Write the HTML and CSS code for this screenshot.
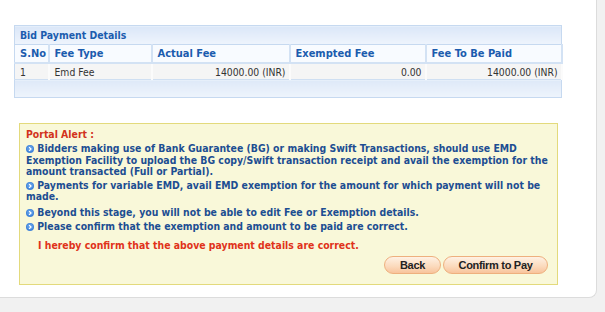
FILE: index.html
```html
<!DOCTYPE html>
<html>
<head>
    <meta charset="utf-8"/>
    <title>Bid Payment Details</title>
    <link rel="stylesheet" href="styles.css">
</head>
<body>
<div class="page">

    <table class="paytable">
        <colgroup>
            <col class="c-sno">
            <col class="c-type">
            <col class="c-fee">
            <col class="c-exm">
            <col class="c-pay">
        </colgroup>
        <tr class="caption">
            <td colspan="5">Bid Payment Details</td>
        </tr>
        <tr class="head">
            <th>S.No</th>
            <th>Fee Type</th>
            <th>Actual Fee</th>
            <th>Exempted Fee</th>
            <th>Fee To Be Paid</th>
        </tr>
        <tr class="data">
            <td>1</td>
            <td>Emd Fee</td>
            <td class="num">14000.00 (INR)</td>
            <td class="num">0.00</td>
            <td class="num">14000.00 (INR)</td>
        </tr>
        <tr class="foot">
            <td colspan="5"></td>
        </tr>
    </table>

    <div class="alert">
        <div class="alert-title">Portal Alert :</div>

        <p class="item item-1"><svg class="bullet" viewBox="0 0 8 8"><circle cx="4" cy="4" r="4" fill="#3f82d9"/><circle cx="4" cy="3.4" r="3" fill="#5b9be6"/><path d="M3.1 2.1 L5 4 L3.1 5.9" stroke="#fff" stroke-width="1.3" fill="none"/></svg> Bidders making use of Bank Guarantee (BG) or making Swift Transactions, should use EMD Exemption Facility to upload the BG copy/Swift transaction receipt and avail the exemption for the amount transacted (Full or Partial).</p>

        <p class="item item-2"><svg class="bullet" viewBox="0 0 8 8"><circle cx="4" cy="4" r="4" fill="#3f82d9"/><circle cx="4" cy="3.4" r="3" fill="#5b9be6"/><path d="M3.1 2.1 L5 4 L3.1 5.9" stroke="#fff" stroke-width="1.3" fill="none"/></svg> Payments for variable EMD, avail EMD exemption for the amount for which payment will not be made.</p>

        <p class="item item-3"><svg class="bullet" viewBox="0 0 8 8"><circle cx="4" cy="4" r="4" fill="#3f82d9"/><circle cx="4" cy="3.4" r="3" fill="#5b9be6"/><path d="M3.1 2.1 L5 4 L3.1 5.9" stroke="#fff" stroke-width="1.3" fill="none"/></svg> Beyond this stage, you will not be able to edit Fee or Exemption details.</p>

        <p class="item item-4"><svg class="bullet" viewBox="0 0 8 8"><circle cx="4" cy="4" r="4" fill="#3f82d9"/><circle cx="4" cy="3.4" r="3" fill="#5b9be6"/><path d="M3.1 2.1 L5 4 L3.1 5.9" stroke="#fff" stroke-width="1.3" fill="none"/></svg> Please confirm that the exemption and amount to be paid are correct.</p>

        <p class="confirm">I hereby confirm that the above payment details are correct.</p>

        <div class="actions">
            <button type="button" class="btn btn-back">Back</button>
            <button type="button" class="btn btn-pay">Confirm to Pay</button>
        </div>
    </div>

</div>
</body>
</html>
```

FILE: styles.css
```css
body {
    margin: 0;
    background: #f1f1f1;
    font-family: "DejaVu Sans Condensed", "DejaVu Sans", sans-serif;
}

.page {
    box-sizing: border-box;
    width: 597px;
    height: 298px;
    padding: 25px 0 0 14px;
    background: #fff;
    border-right: 1px solid #dcdcdc;
    border-bottom: 1px solid #dcdcdc;
    border-bottom-right-radius: 8px;
}

/* payment table */
.paytable {
    width: 547px;
    table-layout: fixed;
    border-collapse: collapse;
    border: 1px solid #c6d9f0;
}
.c-sno { width: 34px; }
.c-type { width: 103px; }
.c-fee { width: 138px; }
.c-exm { width: 136px; }
.c-pay { width: 136px; }

.paytable td, .paytable th {
    padding: 0 5px;
    overflow: hidden;
    white-space: nowrap;
}
.caption td {
    height: 18px;
    font-size: 10.4px;
    font-weight: bold;
    color: #1b5cae;
    background: linear-gradient(#dbe7f8, #eef4fc);
    border-bottom: 1px solid #c6d9f0;
}
.head th {
    height: 17px;
    text-align: left;
    font-size: 11px;
    font-weight: bold;
    color: #1b5cae;
    background: #f8fbff;
    border: 1px solid #d3e2f4;
    border-width: 0 2px 2px 0;
}
.data td {
    height: 15px;
    font-size: 10.3px;
    color: #333;
    background: #f5f5f5;
    border-right: 2px solid #fbfbfb;
    border-bottom: 1px solid #cfdff2;
}
.data td.num {
    text-align: right;
    padding-right: 3px;
}
.foot td {
    height: 17px;
    background: linear-gradient(#dee9f8, #eef4fc);
}

/* portal alert */
.alert {
    box-sizing: border-box;
    width: 539px;
    height: 162px;
    margin: 25px 0 0 5px;
    padding: 4px 6px 0 6px;
    background: #f9f8d9;
    border: 1px solid #e3da7c;
    font-size: 10.4px;
    font-weight: bold;
    line-height: 11.5px;
}
.alert-title {
    line-height: 12px;
    color: #d2331c;
}
.item {
    margin: 0;
    color: #1d4e92;
}
.item-1 { margin-top: 3px; }
.item-2 { margin-top: 2px; }
.item-3 { margin-top: 4px; }
.item-4 { margin-top: 3px; }
.bullet {
    width: 8px;
    height: 8px;
    vertical-align: -1px;
}
.confirm {
    margin: 7px 0 0 12px;
    color: #e0321a;
}
.actions {
    display: flex;
    justify-content: flex-end;
    gap: 2px;
    margin: 5px 3px 0 0;
}
.btn {
    box-sizing: border-box;
    height: 18px;
    padding: 0;
    border: 1px solid #eeb07e;
    border-radius: 9px;
    background: linear-gradient(#fef1e4, #fbd9bb 60%, #f8c49c);
    font-family: "Liberation Sans", Arial, sans-serif;
    font-size: 11px;
    font-weight: bold;
    letter-spacing: -0.3px;
    color: #222;
}
.btn-back { width: 57px; }
.btn-pay { width: 105px; }
```
